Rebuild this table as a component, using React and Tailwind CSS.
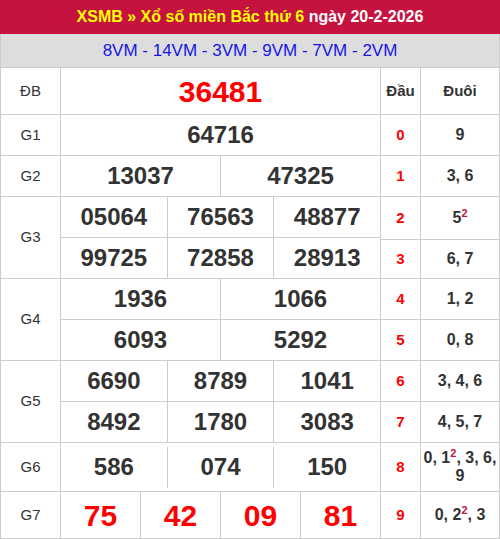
import React from "react";

// right-side head/tail table; 2 marks a red superscript "2"
const tail = [
  ["0", ["9"], "row-start-2"],
  ["1", ["3, 6"], "row-start-3"],
  ["2", ["5", 2], "row-start-4"],
  ["3", ["6, 7"], "row-start-5"],
  ["4", ["1, 2"], "row-start-6"],
  ["5", ["0, 8"], "row-start-7"],
  ["6", ["3, 4, 6"], "row-start-8"],
  ["7", ["4, 5, 7"], "row-start-9"],
  ["8", ["0, 1", 2, ", 3, 6, 9"], "row-start-10"],
  ["9", ["0, 2", 2, ", 3"], "row-start-11"],
];

function Sup() {
  return <sup className="text-[11px] text-[#c5123e] font-bold relative -top-[6px]">2</sup>;
}

function Label({ children, pos }) {
  return (
    <div className={`${pos} col-start-1 bg-white flex items-center justify-center text-[15px] text-[#333]`}>
      {children}
    </div>
  );
}

function Nums({ nums, pos, cols, big, red }) {
  return (
    <div className={`${pos} ${cols} col-start-2 bg-[#ccc] grid gap-px`}>
      {nums.map((n, i) => (
        <div
          key={i}
          className={`bg-white flex items-center justify-center font-bold ${big ? "text-[30px]" : "text-[24px]"} ${red ? "text-[#f00]" : "text-[#333]"}`}
        >
          {n}
        </div>
      ))}
    </div>
  );
}

export default function App() {
  return (
    <div className="w-[500px] bg-white font-['Liberation_Sans',Arial,sans-serif]">
      <div className="h-[34px] bg-[#c5123e] flex items-center justify-center text-[16px] font-bold">
        <span className="text-[#ffff00]">XSMB » Xổ số miền Bắc thứ 6</span>
        <span className="text-white">&nbsp;ngày 20-2-2026</span>
      </div>
      <div className="h-[33px] bg-[#ddd] border-x border-[#ccc] flex items-center justify-center text-[17px] text-[#1515e5]">
        8VM - 14VM - 3VM - 9VM - 7VM - 2VM
      </div>
      <div className="grid gap-px p-px bg-[#ccc] grid-cols-[59px_319px_39px_78px] grid-rows-[46px_40px_40px_42px_38px_40px_40px_40px_40px_48px_46px]">
        <Label pos="row-start-1">ĐB</Label>
        <div className="row-start-1 col-start-2 bg-white flex items-center justify-center font-bold text-[30px] text-[#f00]">
          36481
        </div>
        <div className="row-start-1 col-start-3 bg-white flex items-center justify-center font-bold text-[15px] text-[#333]">
          Đầu
        </div>
        <div className="row-start-1 col-start-4 bg-white flex items-center justify-center font-bold text-[15px] text-[#333]">
          Đuôi
        </div>

        <Label pos="row-start-2">G1</Label>
        <Nums pos="row-start-2" cols="grid-cols-1" nums={["64716"]} />

        <Label pos="row-start-3">G2</Label>
        <Nums pos="row-start-3" cols="grid-cols-2" nums={["13037", "47325"]} />

        <Label pos="row-start-4 row-span-2">G3</Label>
        <Nums
          pos="row-start-4 row-span-2"
          cols="grid-cols-3"
          nums={["05064", "76563", "48877", "99725", "72858", "28913"]}
        />

        <Label pos="row-start-6 row-span-2">G4</Label>
        <Nums pos="row-start-6 row-span-2" cols="grid-cols-2" nums={["1936", "1066", "6093", "5292"]} />

        <Label pos="row-start-8 row-span-2">G5</Label>
        <Nums
          pos="row-start-8 row-span-2"
          cols="grid-cols-3"
          nums={["6690", "8789", "1041", "8492", "1780", "3083"]}
        />

        <Label pos="row-start-10">G6</Label>
        <div className="row-start-10 col-start-2 bg-white flex">
          {["586", "074", "150"].map((n, i) => (
            <React.Fragment key={n}>
              {i > 0 && <div className="w-px mt-[4px] mb-[3px] bg-[#ccc]" />}
              <div className="flex-1 flex items-center justify-center font-bold text-[24px] text-[#333]">{n}</div>
            </React.Fragment>
          ))}
        </div>

        <Label pos="row-start-11">G7</Label>
        <Nums pos="row-start-11" cols="grid-cols-4" nums={["75", "42", "09", "81"]} big red />

        {tail.map(([d, parts, pos]) => (
          <React.Fragment key={d}>
            <div className={`${pos} col-start-3 bg-white flex items-center justify-center font-bold text-[15px] text-[#f00]`}>
              {d}
            </div>
            <div
              className={`${pos} col-start-4 bg-white flex items-center justify-center text-center font-bold text-[16px] leading-[18px] text-[#333] px-[2px]`}
            >
              <span>
                {parts.map((p, i) => (p === 2 ? <Sup key={i} /> : <React.Fragment key={i}>{p}</React.Fragment>))}
              </span>
            </div>
          </React.Fragment>
        ))}
      </div>
    </div>
  );
}
